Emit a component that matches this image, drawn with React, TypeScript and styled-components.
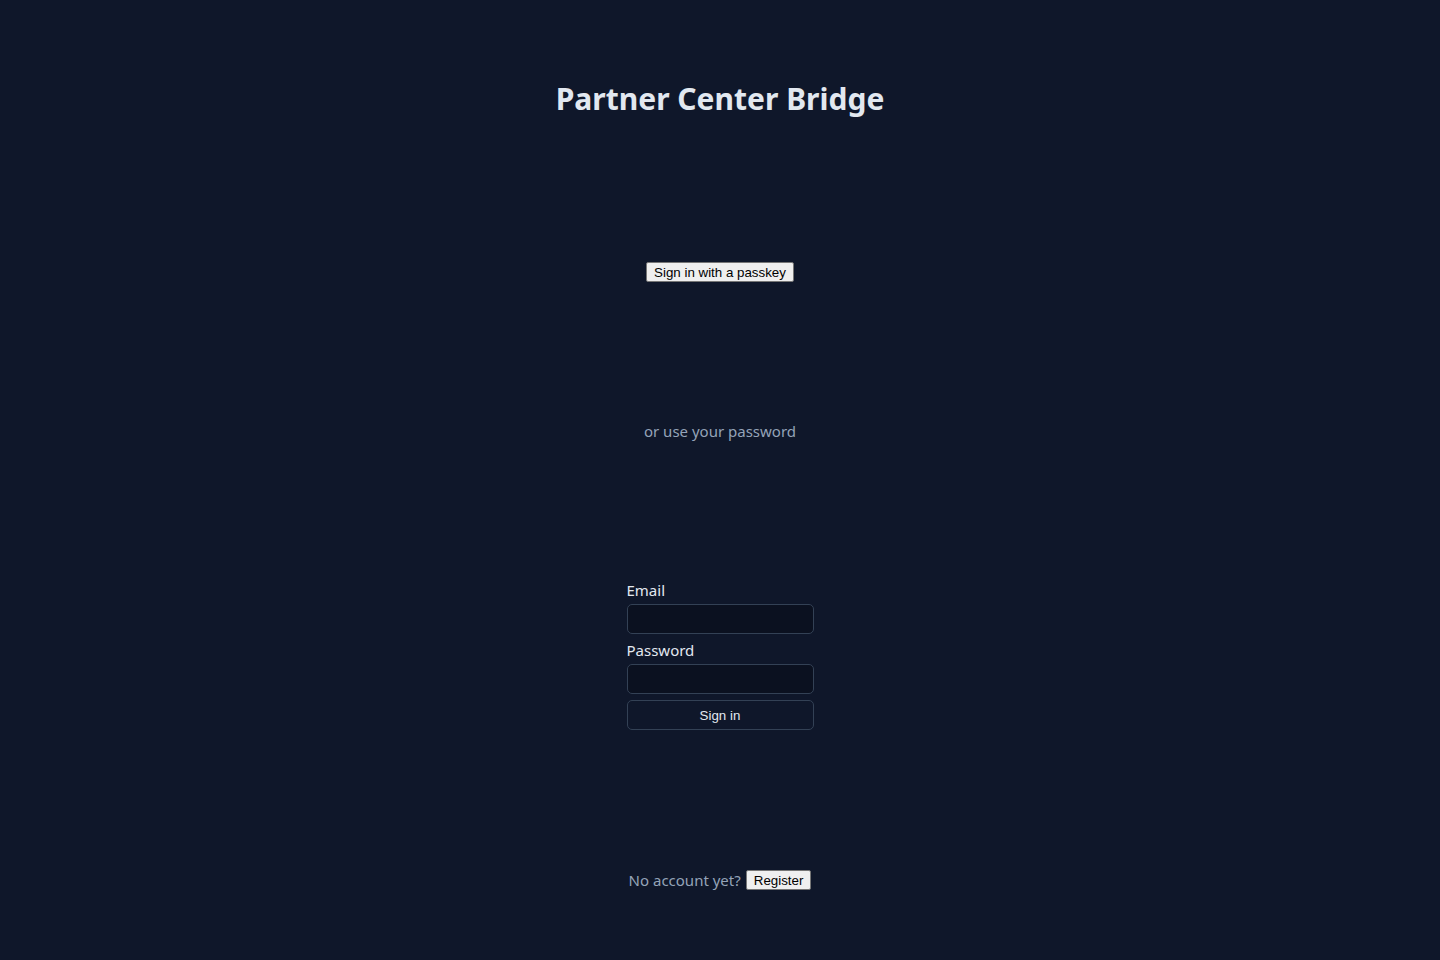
import { createGlobalStyle } from "styled-components";
import styled from "styled-components";

const GlobalStyle = createGlobalStyle`
  html, body {
    margin: 0;
    padding: 0;
    background: #0f172a;
  }
  body {
    font-family: "Noto Sans", "Open Sans", sans-serif;
    color: #e2e8f0;
  }
`;

export default function App() {
  return (
    <>
      <GlobalStyle />
      <Page>
        <Title>Partner Center Bridge</Title>

        <PlainButton type="button">Sign in with a passkey</PlainButton>

        <Muted>or use your password</Muted>

        <Form onSubmit={(e) => e.preventDefault()}>
          <Field>
            <Label htmlFor="email">Email</Label>
            <Input id="email" type="email" />
          </Field>
          <Field>
            <Label htmlFor="password">Password</Label>
            <Input id="password" type="password" />
          </Field>
          <SubmitButton type="submit">Sign in</SubmitButton>
        </Form>

        <Footer>
          <Muted>No account yet?</Muted>
          <PlainButton type="button">Register</PlainButton>
        </Footer>
      </Page>
    </>
  );
}

// 페이지 레이아웃
const Page = styled.main`
  min-height: 100vh;
  box-sizing: border-box;
  display: flex;
  flex-direction: column;
  align-items: center;
  justify-content: space-around;
  padding: 12px 0 0;
`;

const Title = styled.h1`
  margin: 0 0 6px;
  font-size: 30px;
  font-weight: 700;
  line-height: 36px;
  color: #e2e8f0;
`;

const Muted = styled.span`
  font-size: 15px;
  line-height: 22px;
  color: #94a3b8;
`;

// 브라우저 기본 버튼 모양
const PlainButton = styled.button`
  font-family: "Liberation Sans", Arial, sans-serif;
  font-size: 13.33px;
  line-height: 15px;
  color: #000;
  background: #efefef;
  border: 1px solid #767676;
  border-radius: 2px;
  padding: 2px 7px 1px;
  cursor: pointer;
`;

const Form = styled.form`
  width: 187px;
  display: flex;
  flex-direction: column;
  gap: 6px;
`;

const Field = styled.div`
  display: flex;
  flex-direction: column;
  gap: 4px;
`;

const Label = styled.label`
  font-size: 15px;
  line-height: 20px;
  color: #e2e8f0;
`;

const Input = styled.input`
  box-sizing: border-box;
  height: 30px;
  width: 100%;
  background: #0b1120;
  border: 1px solid #334155;
  border-radius: 5px;
  color: #e2e8f0;
  padding: 0 8px;
  outline: none;
`;

const SubmitButton = styled.button`
  box-sizing: border-box;
  height: 30px;
  width: 100%;
  background: transparent;
  border: 1px solid #334155;
  border-radius: 5px;
  color: #e2e8f0;
  font-family: "Liberation Sans", Arial, sans-serif;
  font-size: 13.33px;
  cursor: pointer;
`;

const Footer = styled.div`
  display: flex;
  align-items: center;
  gap: 5px;
`;
